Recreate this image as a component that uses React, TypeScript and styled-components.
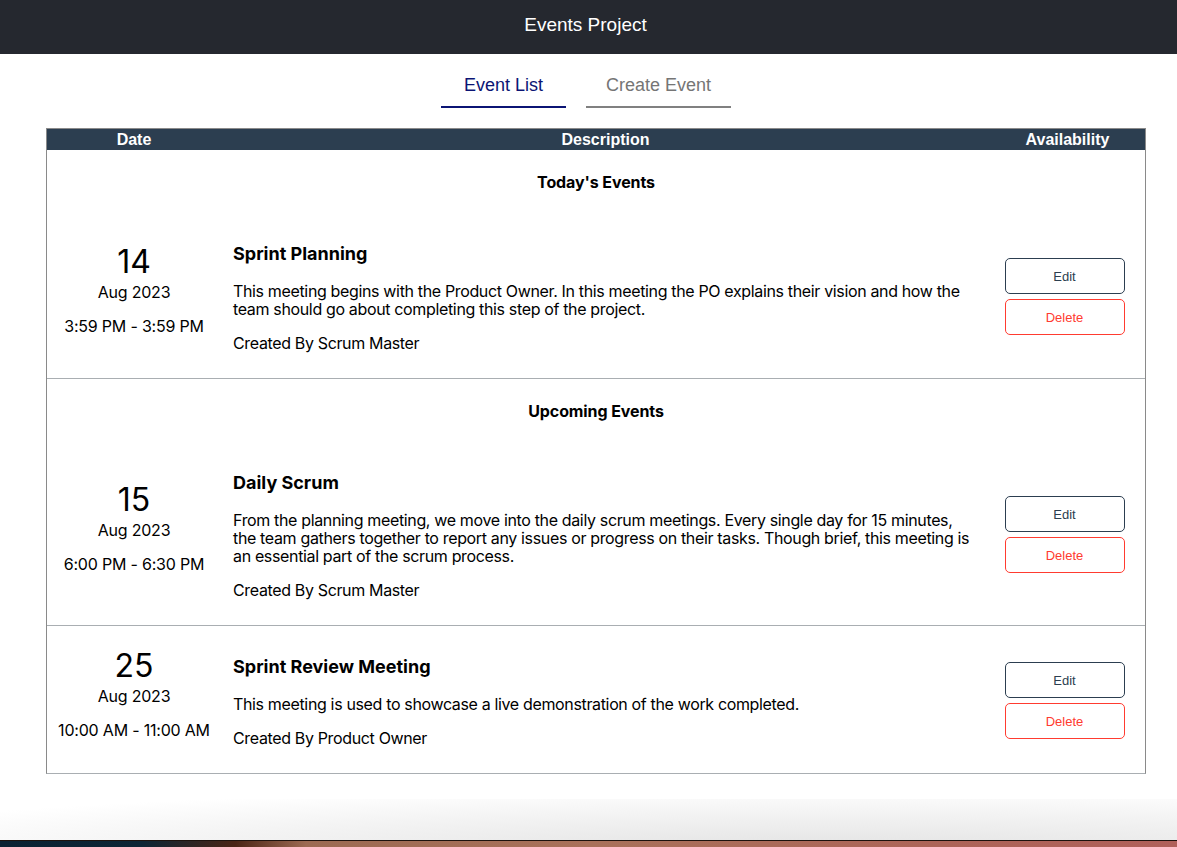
import React from "react";
import styled, { createGlobalStyle } from "styled-components";

const GlobalStyle = createGlobalStyle`
  html, body { margin: 0; padding: 0; background: #ffffff; }
  body { font-family: Inter, "Noto Sans", sans-serif; color: #000; }
  * { box-sizing: border-box; }
`;

const Page = styled.div`
  min-height: 100vh;
  display: flex;
  flex-direction: column;
`;

const TopBar = styled.header`
  height: 54px;
  background: #25282f;
  display: flex;
  align-items: center;
  justify-content: center;
  color: #ffffff;
  font-family: "Liberation Sans", Arial, sans-serif;
  font-size: 19px;
  padding: 0 6px 5px 0;
`;

const Tabs = styled.nav`
  display: flex;
  justify-content: center;
  gap: 20px;
  padding: 19px 5px 0 0;
  margin-bottom: 20px;
`;

const Tab = styled.button<{ $active?: boolean; $w: number }>`
  width: ${(p) => p.$w}px;
  border: none;
  background: none;
  padding: 0 0 8px;
  font-family: "Liberation Sans", Arial, sans-serif;
  font-size: 18px;
  line-height: 25px;
  color: ${(p) => (p.$active ? "#0b1474" : "#757575")};
  border-bottom: 2px solid ${(p) => (p.$active ? "#0b1474" : "#808080")};
  cursor: pointer;
`;

const Main = styled.main`
  flex: 1;
  padding: 0 31px 0 46px;
`;

const Table = styled.section`
  border-left: 1px solid #8a8a8a;
  border-right: 1px solid #8a8a8a;
  border-bottom: 1px solid #a9aeb2;
`;

const Cols = `
  display: grid;
  grid-template-columns: 174px 1fr 155px;
`;

const HeadRow = styled.div`
  ${Cols}
  background: #2c3e50;
  color: #ffffff;
  height: 22px;
  align-items: center;
  font-family: "Liberation Sans", Arial, sans-serif;
  font-weight: bold;
  font-size: 16px;
  border: 1px solid #8a8a8a;
  border-bottom: none;
`;

const HeadCell = styled.div`
  text-align: center;
`;

const Section = styled.div`
  & + & {
    border-top: 1px solid #a9aeb2;
  }
`;

const SectionTitle = styled.div`
  height: 64px;
  display: flex;
  align-items: center;
  justify-content: center;
  font-weight: 700;
  font-size: 16px;
  letter-spacing: -0.1px;
`;

const EventRow = styled.div<{ $last?: boolean }>`
  ${Cols}
  align-items: center;
  padding: ${(p) => (p.$last ? "28px 0 26px" : "27px 0 26px")};
`;

const DateCell = styled.div`
  display: flex;
  flex-direction: column;
  align-items: center;
  margin-top: -16px;
  letter-spacing: -0.2px;
`;

const Day = styled.div`
  font-size: 32px;
  line-height: 40px;
  margin-bottom: 1px;
  letter-spacing: 0;
`;

const Month = styled.div`
  font-size: 16px;
  line-height: 18px;
`;

const Time = styled.div`
  font-size: 16px;
  line-height: 18px;
  margin-top: 16px;
`;

const Info = styled.div`
  padding: 0 12px;
  letter-spacing: -0.35px;
`;

const Title = styled.div`
  font-weight: 700;
  font-size: 18px;
  line-height: 22px;
  padding-top: 2px;
  margin-bottom: 17px;
  letter-spacing: 0;
`;

const Desc = styled.p`
  margin: 0 0 16px;
  font-size: 16px;
  line-height: 18px;
`;

const Author = styled.div`
  font-size: 16px;
  line-height: 18px;
`;

const Actions = styled.div`
  display: flex;
  flex-direction: column;
  align-items: center;
  gap: 5px;
  padding-right: 6px;
`;

const ActionButton = styled.button<{ $danger?: boolean }>`
  width: 120px;
  height: 36px;
  background: #ffffff;
  border-radius: 5px;
  border: 1px solid ${(p) => (p.$danger ? "#ff3b30" : "#2c3e50")};
  color: ${(p) => (p.$danger ? "#ff3b30" : "#2c3e50")};
  font-family: "Liberation Sans", Arial, sans-serif;
  font-size: 13px;
  cursor: pointer;
`;

const Footer = styled.div`
  height: 48px;
  display: flex;
  flex-direction: column;
  justify-content: flex-end;
  background: radial-gradient(ellipse 120% 180% at 70% 110%, #e2e2e2 0%, #f3f3f3 45%, #ffffff 75%);
`;

const Dock = styled.div`
  height: 7px;
  border-top: 1px solid #1c120d;
  background: linear-gradient(90deg, #0a2233 0%, #0c2535 12%, #4a2415 20%, #9c6a52 26%, #a9715a 50%, #ad6458 80%, #b0605a 100%);
`;

type Ev = {
  day: string;
  month: string;
  time: string;
  title: string;
  desc: string;
  author: string;
};

const sections: { title?: string; events: Ev[] }[] = [
  {
    title: "Today's Events",
    events: [
      {
        day: "14",
        month: "Aug 2023",
        time: "3:59 PM - 3:59 PM",
        title: "Sprint Planning",
        desc:
          "This meeting begins with the Product Owner. In this meeting the PO explains their vision and how the team should go about completing this step of the project.",
        author: "Created By Scrum Master",
      },
    ],
  },
  {
    title: "Upcoming Events",
    events: [
      {
        day: "15",
        month: "Aug 2023",
        time: "6:00 PM - 6:30 PM",
        title: "Daily Scrum",
        desc:
          "From the planning meeting, we move into the daily scrum meetings. Every single day for 15 minutes, the team gathers together to report any issues or progress on their tasks. Though brief, this meeting is an essential part of the scrum process.",
        author: "Created By Scrum Master",
      },
    ],
  },
  {
    events: [
      {
        day: "25",
        month: "Aug 2023",
        time: "10:00 AM - 11:00 AM",
        title: "Sprint Review Meeting",
        desc: "This meeting is used to showcase a live demonstration of the work completed.",
        author: "Created By Product Owner",
      },
    ],
  },
];

export default function App() {
  return (
    <Page>
      <GlobalStyle />
      <TopBar>Events Project</TopBar>
      <Tabs>
        <Tab $active $w={125}>
          Event List
        </Tab>
        <Tab $w={145}>Create Event</Tab>
      </Tabs>
      <Main>
        <HeadRow>
          <HeadCell>Date</HeadCell>
          <HeadCell>Description</HeadCell>
          <HeadCell>Availability</HeadCell>
        </HeadRow>
        <Table>
          {sections.map((s, i) => (
            <Section key={i}>
              {s.title && <SectionTitle>{s.title}</SectionTitle>}
              {s.events.map((e) => (
                <EventRow key={e.title} $last={!s.title}>
                  <DateCell>
                    <Day>{e.day}</Day>
                    <Month>{e.month}</Month>
                    <Time>{e.time}</Time>
                  </DateCell>
                  <Info>
                    <Title>{e.title}</Title>
                    <Desc>{e.desc}</Desc>
                    <Author>{e.author}</Author>
                  </Info>
                  <Actions>
                    <ActionButton>Edit</ActionButton>
                    <ActionButton $danger>Delete</ActionButton>
                  </Actions>
                </EventRow>
              ))}
            </Section>
          ))}
        </Table>
      </Main>
      <Footer>
        <Dock />
      </Footer>
    </Page>
  );
}
